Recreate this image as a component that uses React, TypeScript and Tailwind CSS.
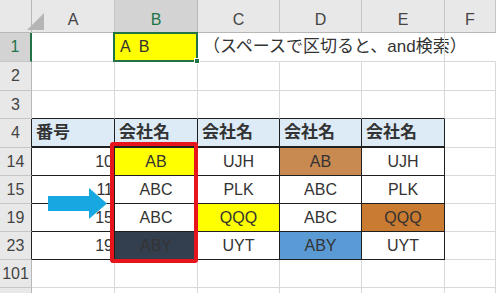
import React from "react";

type Cell = {
  text?: string;
  align?: "left" | "center" | "right";
  bg?: string;
  bold?: boolean;
  table?: boolean;
  headRow?: boolean;
};

const COLS = "grid grid-cols-[32px_83px_83px_82px_82px_83px_1fr]";
const FONT = { fontFamily: '"Liberation Sans", "Noto Sans CJK JP", Arial, sans-serif' };

const letters = ["A", "B", "C", "D", "E", "F"];

const alignClass = {
  left: "justify-start pl-[4px]",
  center: "justify-center",
  right: "justify-end pr-[1px]",
};

function RowHeader({ label, active, dark }: { label: string; active?: boolean; dark?: boolean }) {
  return (
    <div
      className={`flex items-center justify-center border-b border-[#c6c6c6] text-[16px] ${
        active
          ? "bg-[#d3d3d3] text-[#217346] border-r-2 border-r-[#217346]"
          : dark
          ? "bg-[#e8e8e8] text-[#444] border-r border-r-[#222]"
          : "bg-[#e8e8e8] text-[#444] border-r border-r-[#b7b7b7]"
      }`}
    >
      {label}
    </div>
  );
}

function GridCell({ cell, topTable }: { cell: Cell; topTable?: boolean }) {
  const border = cell.table
    ? `border-r border-[#1f1f1f] ${cell.headRow ? "border-b-2" : "border-b"} border-b-[#1f1f1f]`
    : `border-r border-b border-[#d9d9d9] ${topTable ? "border-b-[#1f1f1f]" : ""}`;
  return (
    <div
      className={`flex items-center overflow-visible whitespace-nowrap text-[16px] text-[#333] ${border} ${
        alignClass[cell.align ?? "center"]
      } ${cell.bold ? "font-bold text-[17px] text-[#222]" : ""}`}
      style={cell.bg ? { backgroundColor: cell.bg } : undefined}
    >
      {cell.text}
    </div>
  );
}

function SheetRow({
  num,
  cells,
  h,
  dark,
  topTable,
}: {
  num: string;
  cells: Cell[];
  h: string;
  dark?: boolean;
  topTable?: boolean;
}) {
  return (
    <div className={`${COLS} ${h}`}>
      <RowHeader label={num} dark={dark} />
      {cells.map((c, i) => (
        <GridCell key={i} cell={c} topTable={topTable && i < 5} />
      ))}
    </div>
  );
}

const blank = (n: number): Cell[] => Array.from({ length: n }, () => ({}));

const dataRows: { num: string; cells: Cell[] }[] = [
  {
    num: "14",
    cells: [
      { text: "10", align: "right", table: true },
      { text: "AB", bg: "#ffff00", table: true },
      { text: "UJH", table: true },
      { text: "AB", bg: "#c98a52", table: true },
      { text: "UJH", table: true },
      {},
    ],
  },
  {
    num: "15",
    cells: [
      { text: "11", align: "right", table: true },
      { text: "ABC", table: true },
      { text: "PLK", table: true },
      { text: "ABC", table: true },
      { text: "PLK", table: true },
      {},
    ],
  },
  {
    num: "19",
    cells: [
      { text: "15", align: "right", table: true },
      { text: "ABC", table: true },
      { text: "QQQ", bg: "#ffff00", table: true },
      { text: "ABC", table: true },
      { text: "QQQ", bg: "#c97b32", table: true },
      {},
    ],
  },
  {
    num: "23",
    cells: [
      { text: "19", align: "right", table: true },
      { text: "ABY", bg: "#333f4f", table: true },
      { text: "UYT", table: true },
      { text: "ABY", bg: "#5b9bd5", table: true },
      { text: "UYT", table: true },
      {},
    ],
  },
];

export default function App() {
  return (
    <div className="relative h-[293px] w-[496px] overflow-hidden bg-white" style={FONT}>
      {/* column headers */}
      <div className={`${COLS} h-[33px]`}>
        <div className="relative border-r border-b border-[#b7b7b7] bg-[#e8e8e8]">
          <div className="absolute left-[10px] top-[13px] h-0 w-0 border-l-[17px] border-t-[17px] border-l-transparent border-t-transparent border-b-0 border-r-0 [border-right:17px_solid_#b5b5b5] [border-bottom:0px_solid_transparent]" />
        </div>
        {letters.map((l) => (
          <div
            key={l}
            className={`flex items-center justify-center border-r border-b pt-[8px] text-[16px] ${
              l === "B"
                ? "bg-[#d3d3d3] text-[#217346] border-r-[#b7b7b7] border-b-[#217346]"
                : "bg-[#e8e8e8] text-[#444] border-[#c6c6c6] border-b-[#b7b7b7]"
            }`}
          >
            {l}
          </div>
        ))}
      </div>

      {/* row 1 with the active cell */}
      <div className={`${COLS} h-[29px]`}>
        <RowHeader label="1" active />
        <div className="border-r border-b border-[#d9d9d9]" />
        <div className="relative border-2 border-[#217346] -ml-[2px] -mt-[1px] bg-[#ffff00] flex items-center whitespace-pre pl-[5px] text-[16px] text-[#333]">
          {"A  B"}
          <div className="absolute -bottom-[4px] -right-[4px] h-[6px] w-[6px] border border-white bg-[#217346]" />
        </div>
        <div className="flex items-center whitespace-nowrap border-b border-[#d9d9d9] pl-[5px] text-[17px] text-[#333]">
          （スペースで区切ると、and検索）
        </div>
        <div className="border-b border-[#d9d9d9]" />
        <div className="border-r border-b border-[#d9d9d9]" />
        <div className="border-b border-[#d9d9d9]" />
      </div>

      <SheetRow num="2" cells={blank(6)} h="h-[29px]" />
      <SheetRow num="3" cells={blank(6)} h="h-[28px]" topTable />
      <SheetRow
        num="4"
        h="h-[29px]"
        dark
        cells={[
          { text: "番号", align: "left", bold: true, bg: "#ddebf7", table: true, headRow: true },
          { text: "会社名", align: "left", bold: true, bg: "#ddebf7", table: true, headRow: true },
          { text: "会社名", align: "left", bold: true, bg: "#ddebf7", table: true, headRow: true },
          { text: "会社名", align: "left", bold: true, bg: "#ddebf7", table: true, headRow: true },
          { text: "会社名", align: "left", bold: true, bg: "#ddebf7", table: true, headRow: true },
          {},
        ]}
      />
      {dataRows.map((r) => (
        <SheetRow key={r.num} num={r.num} cells={r.cells} h="h-[28px]" dark />
      ))}
      <SheetRow num="101" cells={blank(6)} h="h-[28px]" />
      <SheetRow num="" cells={blank(6)} h="h-[28px]" />

      {/* highlight frame around column B results */}
      <div className="pointer-events-none absolute left-[110px] top-[142px] h-[121px] w-[88px] rounded-[3px] border-4 border-[#e8141c]" />

      {/* pointer arrow */}
      <svg className="absolute left-[48px] top-[188px]" width="60" height="31" viewBox="0 0 60 31">
        <rect x="0" y="8" width="42" height="15" fill="#17a8e2" />
        <polygon points="41,0 59,15.5 41,31" fill="#17a8e2" />
      </svg>
    </div>
  );
}
